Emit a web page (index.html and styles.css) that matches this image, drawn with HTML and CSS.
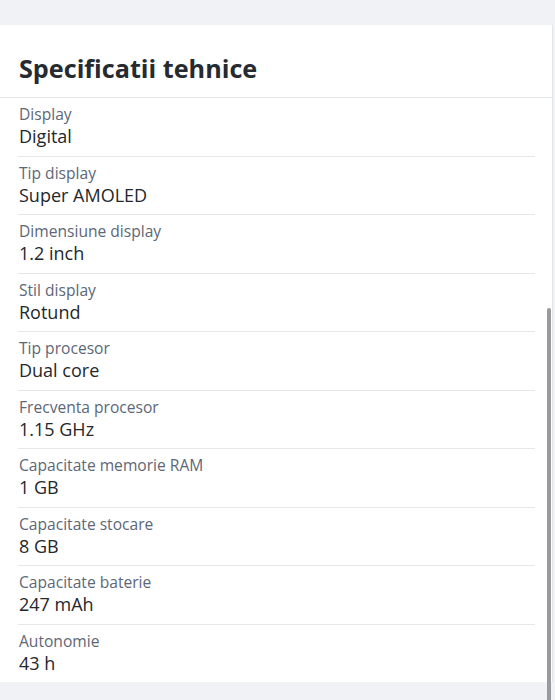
FILE: index.html
```html
<!DOCTYPE html>
<html lang="ro">
<head>
<meta charset="utf-8">
<link rel="stylesheet" href="styles.css">
</head>
<body>
<div class="page">
  <section class="panel">
    <header class="panel-head"><h2 class="title">Specificatii tehnice</h2></header>
    <ul class="specs">
      <li class="spec"><span class="label">Display</span><span class="value">Digital</span></li>
      <li class="spec"><span class="label">Tip display</span><span class="value">Super AMOLED</span></li>
      <li class="spec"><span class="label">Dimensiune display</span><span class="value">1.2 inch</span></li>
      <li class="spec"><span class="label">Stil display</span><span class="value">Rotund</span></li>
      <li class="spec"><span class="label">Tip procesor</span><span class="value">Dual core</span></li>
      <li class="spec"><span class="label">Frecventa procesor</span><span class="value">1.15 GHz</span></li>
      <li class="spec"><span class="label">Capacitate memorie RAM</span><span class="value">1 GB</span></li>
      <li class="spec"><span class="label">Capacitate stocare</span><span class="value">8 GB</span></li>
      <li class="spec"><span class="label">Capacitate baterie</span><span class="value">247 mAh</span></li>
      <li class="spec"><span class="label">Autonomie</span><span class="value">43 h</span></li>
    </ul>
  </section>
  <div class="scrollbar"></div>
</div>
</body>
</html>
```
FILE: styles.css
```css
html, body {
  margin: 0;
  padding: 0;
  background: #f1f2f5;
  font-family: "Open Sans", "Noto Sans", sans-serif;
}
.page {
  position: relative;
  height: 700px;
  overflow: hidden;
  padding-top: 25px;
  box-sizing: border-box;
}
.panel {
  width: 553px;
  background: #ffffff;
  border-right: 1px solid #e4e5e8;
  box-sizing: border-box;
}
.panel-head {
  height: 73px;
  box-sizing: border-box;
  display: flex;
  align-items: center;
  padding: 13px 19px 0;
  border-bottom: 1px solid #e3e5e8;
}
.title {
  margin: 0;
  font-size: 25.2px;
  font-weight: 700;
  color: #262a31;
  letter-spacing: 0;
}
.specs {
  list-style: none;
  margin: 0;
  padding: 0 17px 0 18px;
}
.spec {
  display: flex;
  flex-direction: column;
  padding: 6px 0 7.5px 1px;
  border-bottom: 1px solid #e6e7ea;
}
.spec:last-child {
  border-bottom: none;
}
.label {
  font-size: 15.6px;
  line-height: 20px;
  color: #5d6777;
}
.value {
  font-size: 18px;
  line-height: 24px;
  color: #24272c;
}
.scrollbar {
  position: absolute;
  left: 547px;
  top: 308px;
  width: 4px;
  height: 400px;
  background: #9a9a9c;
  border-radius: 2px;
}
```
